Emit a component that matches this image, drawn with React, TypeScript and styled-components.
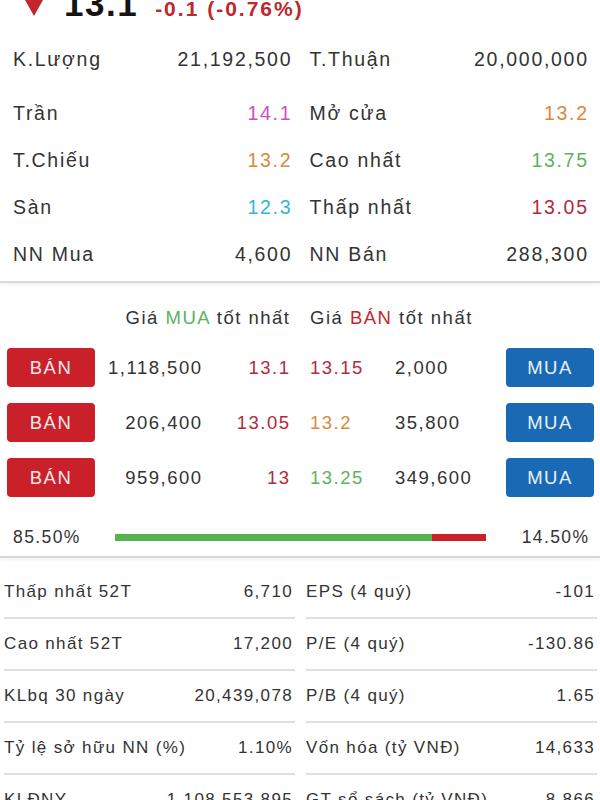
import styled, { createGlobalStyle, css } from 'styled-components';

const FONT = `'Liberation Sans', Arial, Helvetica, sans-serif`;

const C = {
	text: '#333333',
	red: '#c1272d',
	magenta: '#d24bc3',
	orange: '#d98840',
	green: '#5bb35b',
	cyan: '#2fb5dc',
	darkRed: '#b22a3c',
	sell: '#c9202a',
	buy: '#1a69b5',
	line: '#e0e0e0',
};

const GlobalStyle = createGlobalStyle`
	html, body {
		margin: 0;
		padding: 0;
		background: #ffffff;
	}
	body {
		font-family: ${FONT};
		color: ${C.text};
	}
`;

const Page = styled.div`
	width: 600px;
	overflow: hidden;
`;

/* ---------- header ---------- */

const Header = styled.div`
	display: flex;
	align-items: baseline;
	height: 50px;
	margin-top: -14px;
	padding-left: 25px;
	line-height: 36px;
`;

const DownArrow = styled.svg`
	margin-right: 21px;
`;

const LastPrice = styled.span`
	font-size: 35px;
	font-weight: 700;
	letter-spacing: 1.5px;
	color: #141414;
	margin-right: 17px;
`;

const Change = styled.span`
	font-size: 21px;
	font-weight: 700;
	letter-spacing: 2px;
	color: ${C.red};
`;

/* ---------- quote stats ---------- */

const Stats = styled.div`
	padding: 0 13px;
`;

const StatsRow = styled.div<{ $gapAfter?: boolean }>`
	display: grid;
	grid-template-columns: 1fr 1fr;
	column-gap: 19px;
	height: 47px;
	align-items: center;
	margin-bottom: ${p => (p.$gapAfter ? '7px' : '0')};
`;

const StatCell = styled.div`
	display: flex;
	justify-content: space-between;
	font-size: 19.5px;
	letter-spacing: 1.7px;
	margin-right: -1.7px;
`;

const Value = styled.span<{ $color?: string }>`
	color: ${p => p.$color || C.text};
`;

const Divider = styled.div`
	height: 2px;
	margin-top: 3px;
	background: #d9d9d9;
	box-shadow: 0 2px 3px rgba(0, 0, 0, 0.07);
`;

/* ---------- order book ---------- */

const OrderBook = styled.div`
	padding: 15px 6px 0 7px;
`;

const bookColumns = css`
	display: grid;
	grid-template-columns: 88px 106px 88px 106px 1fr 88px;
	align-items: center;
	font-size: 18.5px;
	letter-spacing: 1.5px;
`;

const BookHead = styled.div`
	${bookColumns};
	height: 40px;
	margin-bottom: 10px;
`;

const HeadBid = styled.div`
	grid-column: 2 / 4;
	text-align: right;
	margin-right: -1.5px;
`;

const HeadAsk = styled.div`
	grid-column: 4 / 6;
	padding-left: 21px;
`;

const Word = styled.span<{ $color: string }>`
	color: ${p => p.$color};
`;

const BookRows = styled.div`
	${bookColumns};
	grid-auto-rows: 39px;
	row-gap: 16px;
`;

const ActionButton = styled.div<{ $kind: 'sell' | 'buy' }>`
	height: 39px;
	display: flex;
	align-items: center;
	justify-content: center;
	border-radius: 4px;
	background: ${p => (p.$kind === 'sell' ? C.sell : C.buy)};
	color: ${p => (p.$kind === 'sell' ? '#fde6e8' : '#e8f1fb')};
`;

const BookNum = styled.div<{ $align: 'left' | 'right'; $color?: string; $indent?: boolean }>`
	text-align: ${p => p.$align};
	padding-left: ${p => (p.$indent ? '21px' : '0')};
	margin-right: ${p => (p.$align === 'right' ? '-1.5px' : '0')};
	color: ${p => p.$color || C.text};
`;

const RatioRow = styled.div`
	display: grid;
	grid-template-columns: 102px 371px 1fr;
	align-items: center;
	height: 30px;
	margin-top: 25px;
	margin-bottom: 4px;
	padding: 0 6px;
	font-size: 17.5px;
	letter-spacing: 1.4px;
`;

const RatioRight = styled.div`
	text-align: right;
	margin-right: -1.4px;
`;

const Bar = styled.div`
	display: flex;
	height: 7px;
	background: ${C.sell};
`;

const BarFill = styled.div`
	height: 100%;
	background: #55b24f;
`;

/* ---------- fundamentals ---------- */

const InfoGrid = styled.div`
	display: grid;
	grid-template-columns: 1fr 1fr;
	column-gap: 11px;
	padding: 9px 3px 0 4px;
`;

const InfoCell = styled.div`
	display: flex;
	justify-content: space-between;
	align-items: center;
	height: 50px;
	padding: 0 2px 0 0;
	border-bottom: 2px solid ${C.line};
	font-size: 17px;
	letter-spacing: 1.35px;
`;

type Stat = [string, string, string?];

const stats: Stat[][] = [
	[['K.Lượng', '21,192,500'], ['T.Thuận', '20,000,000']],
	[['Trần', '14.1', C.magenta], ['Mở cửa', '13.2', C.orange]],
	[['T.Chiếu', '13.2', C.orange], ['Cao nhất', '13.75', C.green]],
	[['Sàn', '12.3', C.cyan], ['Thấp nhất', '13.05', C.darkRed]],
	[['NN Mua', '4,600'], ['NN Bán', '288,300']],
];

const book = [
	{ bidVol: '1,118,500', bid: '13.1', ask: '13.15', askColor: C.darkRed, askVol: '2,000' },
	{ bidVol: '206,400', bid: '13.05', ask: '13.2', askColor: C.orange, askVol: '35,800' },
	{ bidVol: '959,600', bid: '13', ask: '13.25', askColor: C.green, askVol: '349,600' },
];

const buyRatio = 85.5;

const info: [string, string][] = [
	['Thấp nhất 52T', '6,710'],
	['EPS (4 quý)', '-101'],
	['Cao nhất 52T', '17,200'],
	['P/E (4 quý)', '-130.86'],
	['KLbq 30 ngày', '20,439,078'],
	['P/B (4 quý)', '1.65'],
	['Tỷ lệ sở hữu NN (%)', '1.10%'],
	['Vốn hóa (tỷ VNĐ)', '14,633'],
	['KLĐNY', '1,108,553,895'],
	['GT sổ sách (tỷ VNĐ)', '8,866'],
];

function App() {
	return (
		<Page>
			<GlobalStyle />
			<Header>
				<DownArrow width='18' height='16' viewBox='0 0 18 16'>
					<polygon points='0,0 18,0 9,16' fill={C.red} />
				</DownArrow>
				<LastPrice>13.1</LastPrice>
				<Change>-0.1 (-0.76%)</Change>
			</Header>

			<Stats>
				{stats.map((row, i) => (
					<StatsRow key={i} $gapAfter={i === 0}>
						{row.map(([label, value, color]) => (
							<StatCell key={label}>
								<span>{label}</span>
								<Value $color={color}>{value}</Value>
							</StatCell>
						))}
					</StatsRow>
				))}
			</Stats>
			<Divider />

			<OrderBook>
				<BookHead>
					<HeadBid>
						Giá <Word $color={C.green}>MUA</Word> tốt nhất
					</HeadBid>
					<HeadAsk>
						Giá <Word $color={C.red}>BÁN</Word> tốt nhất
					</HeadAsk>
				</BookHead>
				<BookRows>
					{book.map(r => (
						<>
							<ActionButton $kind='sell'>BÁN</ActionButton>
							<BookNum $align='right'>{r.bidVol}</BookNum>
							<BookNum $align='right' $color={C.darkRed}>
								{r.bid}
							</BookNum>
							<BookNum $align='left' $color={r.askColor} $indent>
								{r.ask}
							</BookNum>
							<BookNum $align='left'>{r.askVol}</BookNum>
							<ActionButton $kind='buy'>MUA</ActionButton>
						</>
					))}
				</BookRows>
				<RatioRow>
					<span>{buyRatio.toFixed(2)}%</span>
					<Bar>
						<BarFill style={{ width: `${buyRatio}%` }} />
					</Bar>
					<RatioRight>{(100 - buyRatio).toFixed(2)}%</RatioRight>
				</RatioRow>
			</OrderBook>
			<Divider />

			<InfoGrid>
				{info.map(([label, value]) => (
					<InfoCell key={label}>
						<span>{label}</span>
						<span>{value}</span>
					</InfoCell>
				))}
			</InfoGrid>
		</Page>
	);
}

export default App;
